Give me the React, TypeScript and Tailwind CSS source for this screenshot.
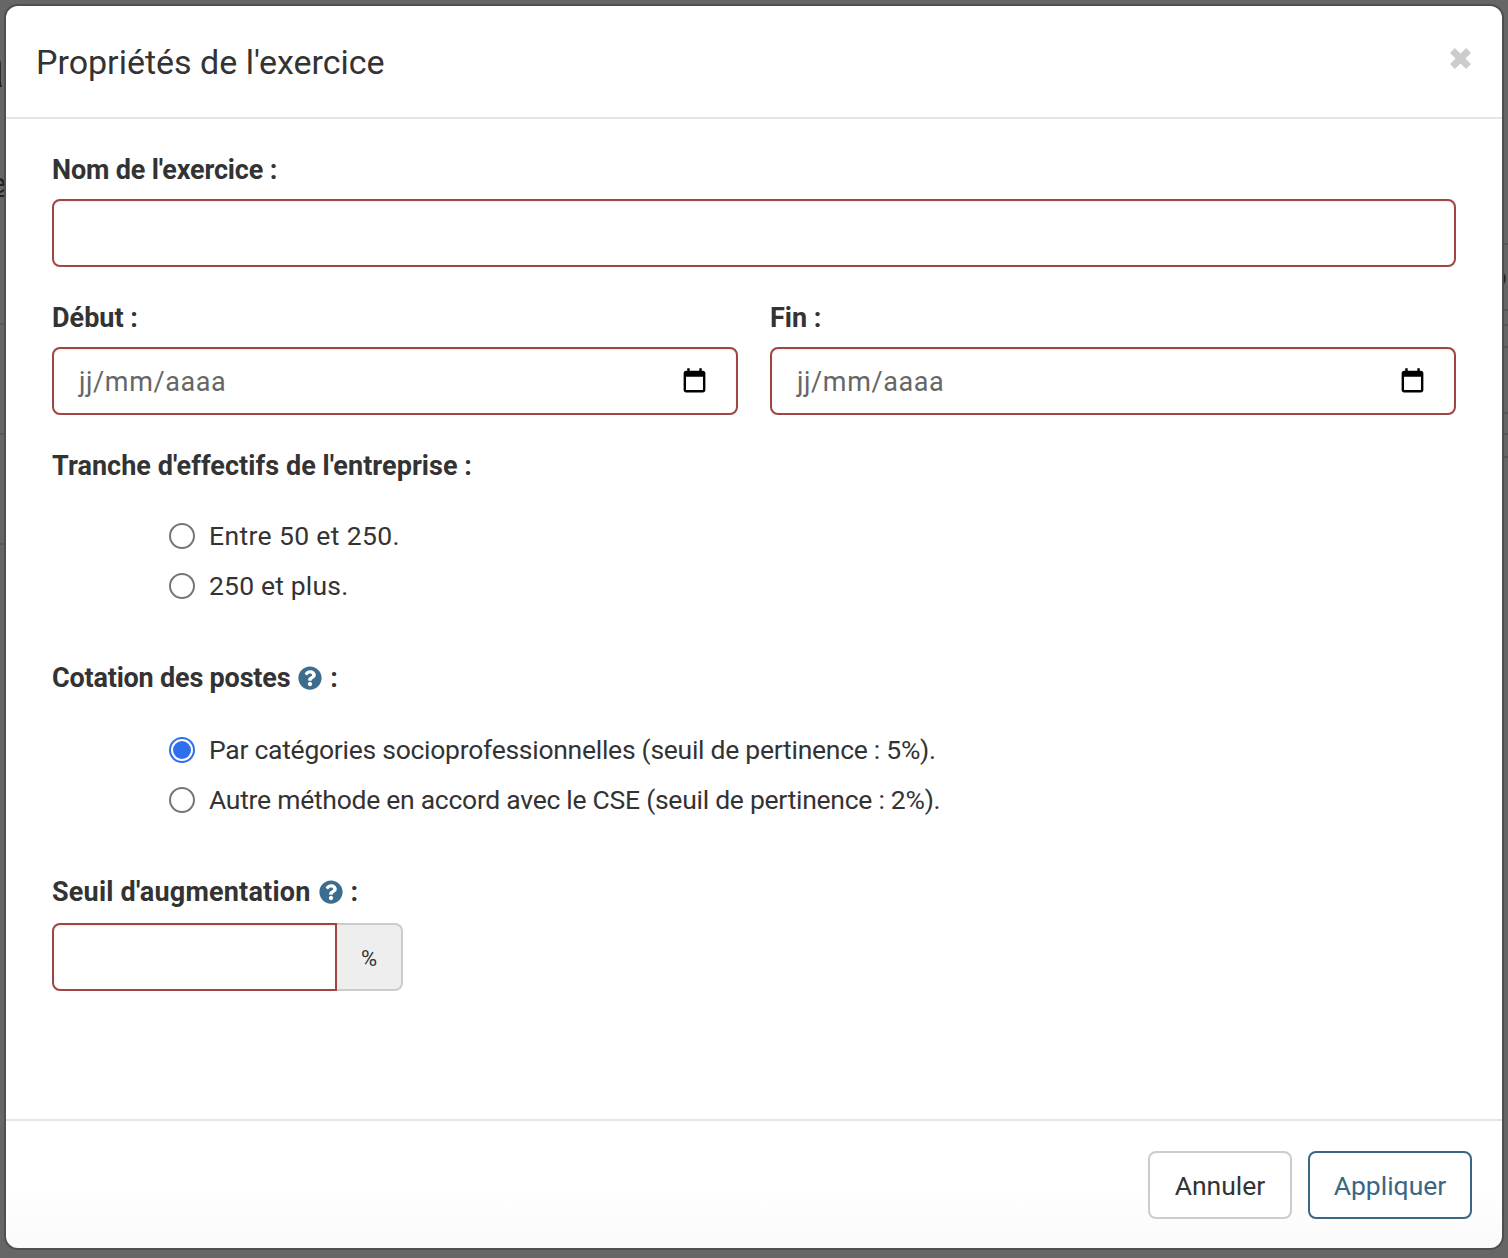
import React from "react";
import { FaQuestionCircle } from "react-icons/fa";

const FONT = "font-['Roboto',sans-serif]";

const Label = ({ children, className = "" }: { children: React.ReactNode; className?: string }) => (
  <div className={`h-[36px] text-[27px] leading-[36px] font-bold text-[#333] whitespace-nowrap ${className}`}>{children}</div>
);

const Calendar = () => (
  <svg width="29" height="29" viewBox="0 0 24 24" className="shrink-0">
    <path
      fill="#000"
      d="M19 3h-1V1h-2v2H8V1H6v2H5c-1.11 0-1.99.9-1.99 2L3 19c0 1.1.89 2 2 2h14c1.1 0 2-.9 2-2V5c0-1.1-.9-2-2-2zm0 16H5V8h14v11z"
    />
  </svg>
);

const DateField = () => (
  <div className="flex-1 h-[68px] border-2 border-[#a04542] rounded-[8px] bg-white pl-[25px] pr-[27px] flex items-center justify-between shadow-[inset_0_1px_2px_rgba(0,0,0,0.08)]">
    <span className="pt-[2px] text-[27px] text-[#666] tracking-[0.6px]">jj/mm/aaaa</span>
    <Calendar />
  </div>
);

const Radio = ({ label, checked, tracking = "tracking-[-0.27px]" }: { label: string; checked?: boolean; tracking?: string }) => (
  <div className="h-[50px] flex items-center pl-[117px]">
    {checked ? (
      <span className="w-[26px] h-[26px] rounded-full border-2 border-[#2f6fed] flex items-center justify-center">
        <span className="w-[18px] h-[18px] rounded-full bg-[#2f6fed]" />
      </span>
    ) : (
      <span className="w-[26px] h-[26px] rounded-full border-2 border-[#767676] bg-white" />
    )}
    <span className={`ml-[14px] text-[26.5px] text-[#333] whitespace-nowrap ${tracking}`}>{label}</span>
  </div>
);

const Help = () => <FaQuestionCircle className="inline-block text-[#3d6d8e] w-[24px] h-[24px] mx-[8px] align-[-3px]" />;

const BgLine = ({ className }: { className: string }) => <div className={`absolute h-[2px] w-[8px] bg-[#575757] ${className}`} />;

export default function App() {
  return (
    <div className={`relative w-[1508px] h-[1258px] overflow-hidden bg-[#666666] ${FONT}`}>
      <BgLine className="left-0 top-[323px]" />
      <BgLine className="left-0 top-[433px]" />
      <BgLine className="left-0 top-[543px]" />
      <BgLine className="right-0 top-[243px]" />
      <BgLine className="right-0 top-[309px]" />
      <BgLine className="right-0 top-[324px]" />
      <BgLine className="right-0 top-[346px]" />
      <BgLine className="right-0 top-[412px]" />
      <BgLine className="right-0 top-[433px]" />
      <BgLine className="right-0 top-[456px]" />
      <div className="absolute left-[-30px] top-[34px] text-[64px] leading-[64px] font-bold text-[#222]">a</div>
      <div className="absolute left-[-9px] top-[168px] text-[28px] leading-[32px] text-[#222] underline">e</div>
      <div className="absolute left-[1493px] top-[269px] text-[21px] leading-[21px] text-[#222]">D</div>

      <div className="absolute left-[6px] top-[6px] w-[1496px] h-[1242px] bg-gradient-to-b from-white from-[95%] to-[#fafafa] rounded-[12px] flex flex-col shadow-[0_0_0_2px_#4f4f4f]">
        <div className="h-[113px] shrink-0 border-b-2 border-[#e5e5e5] pl-[30px] pr-[30px] flex items-center justify-between">
          <h1 className="pt-[2px] text-[34px] font-normal text-[#333]">Propriétés de l'exercice</h1>
          <svg width="23" height="23" viewBox="0 0 20 20" className="mb-[6px]">
            <path d="M3 3 L17 17 M17 3 L3 17" stroke="#cccccc" strokeWidth="6" />
          </svg>
        </div>

        <div className="flex-1 pt-[33px] px-[46px]">
          <Label className="tracking-[-0.15px]">Nom de l'exercice :</Label>
          <div className="mt-[11px] h-[68px] border-2 border-[#a04542] rounded-[8px] bg-white shadow-[inset_0_1px_2px_rgba(0,0,0,0.08)]" />

          <div className="mt-[33px] flex gap-[32px]">
            <div className="flex-1 flex flex-col">
              <Label>Début :</Label>
              <div className="mt-[11px] flex">
                <DateField />
              </div>
            </div>
            <div className="flex-1 flex flex-col">
              <Label>Fin :</Label>
              <div className="mt-[11px] flex">
                <DateField />
              </div>
            </div>
          </div>

          <div className="mt-[33px]">
            <Label className="tracking-[0.05px]">Tranche d'effectifs de l'entreprise :</Label>
          </div>
          <div className="mt-[27px]">
            <Radio label="Entre 50 et 250." tracking="tracking-[0.36px]" />
            <Radio label="250 et plus." tracking="tracking-[0.18px]" />
          </div>

          <div className="mt-[49px]">
            <Label className="tracking-[-0.2px]">
              Cotation des postes
              <Help />:
            </Label>
          </div>
          <div className="mt-[29px]">
            <Radio checked label="Par catégories socioprofessionnelles (seuil de pertinence : 5%)." />
            <Radio label="Autre méthode en accord avec le CSE (seuil de pertinence : 2%)." />
          </div>

          <div className="mt-[49px]">
            <Label className="tracking-[0.2px]">
              Seuil d'augmentation
              <Help />:
            </Label>
          </div>
          <div className="mt-[13px] flex w-[351px] h-[68px]">
            <div className="w-[285px] border-2 border-[#a04542] rounded-l-[8px] bg-white shadow-[inset_0_1px_2px_rgba(0,0,0,0.08)]" />
            <div className="flex-1 pt-[2px] border-2 border-l-0 border-[#cccccc] rounded-r-[8px] bg-[#eeeeee] flex items-center justify-center text-[22px] text-[#333]">
              %
            </div>
          </div>
        </div>

        <div className="h-[129px] shrink-0 border-t-2 border-[#e5e5e5] pt-[30px] pr-[30px] flex justify-end gap-[16px]">
          <button className="w-[144px] h-[68px] pt-[2px] border-2 border-[#cccccc] rounded-[8px] bg-white text-[26.5px] text-[#333]">Annuler</button>
          <button className="w-[164px] h-[68px] pt-[2px] border-2 border-[#3a6685] rounded-[8px] bg-white text-[26.5px] text-[#3a6685]">Appliquer</button>
        </div>
      </div>
    </div>
  );
}
